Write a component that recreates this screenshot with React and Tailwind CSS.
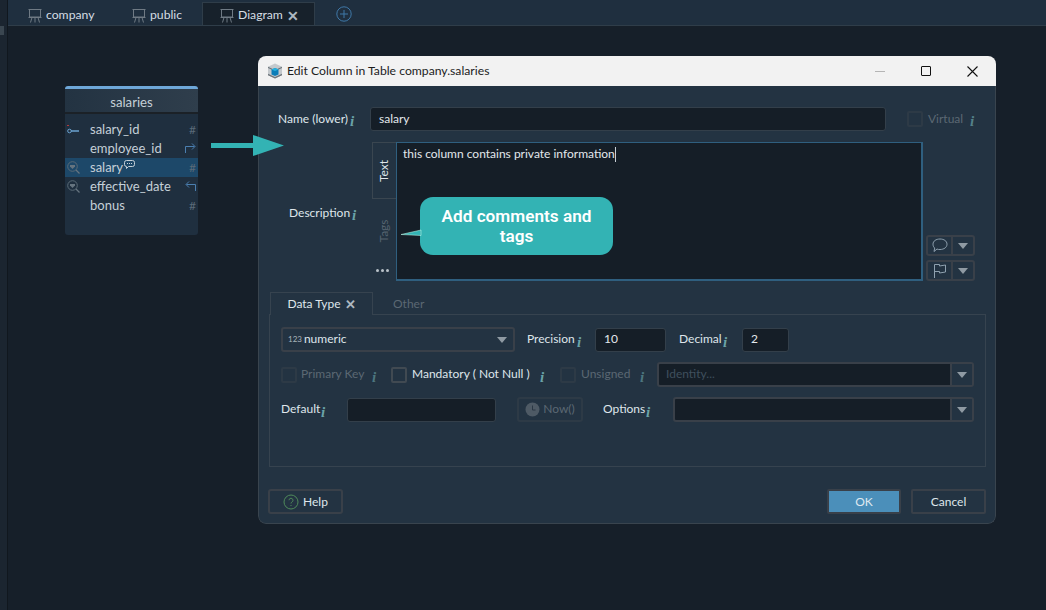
const I = ({ c = "" }) => (
  <span className={`inline-block w-[6px] shrink-0 mt-[6px] font-['Liberation_Serif',serif] italic font-bold text-[15px] leading-none text-[#6aa3a8] ${c}`}>i</span>
);
const Easel = () => (
  <svg className="shrink-0" width="14" height="15" viewBox="0 0 14 15" fill="none" stroke="#6f7a84" strokeWidth="1">
    <path d="M0.500 1.500h13M1.500 1.500v7.500h11v-7.500M0.500 9.500h13M4 9.500l-1.500 5M7 9.500v5M10 9.500l1.500 5" />
  </svg>
);
const Caret = ({ c = "border-t-[#8f9aa3]" }) => (
  <span className={`block w-0 h-0 border-x-[5px] border-x-transparent border-t-[6px] ${c}`} />
);
const Tab = ({ label, active, w }) => (
  <div className={`h-[23px] pt-[3px] flex items-center gap-[5px] ${w} ${active ? "bg-[#17212b] border border-b-0 border-[#2f3d49] pl-[17px]" : "pl-[20px]"}`}>
    <Easel />
    <span className="text-[#d5dde3] text-[12.2px] -ml-[1px]">{label}</span>
    {active && <span className="text-[#aeb8c0] text-[14px] leading-none -ml-[1px] font-bold">✕</span>}
  </div>
);
const Box = ({ c = "", children }) => (
  <div className={`bg-[#151e27] border border-[#333f4a] rounded-[3px] text-[#e3e8ec] flex items-center shrink-0 ${c}`}>{children}</div>
);
const Check = ({ on }) => (
  <span className={`block w-[16px] h-[16px] rounded-[2px] border-2 shrink-0 ${on ? "border-[#414a52]" : "border-[#2d3a46]"}`} />
);
const SelectBox = ({ c, children }) => (
  <div className={`h-[25px] flex shrink-0 rounded-[3px] border-2 border-[#394049] bg-[#151e27] ${c}`}>
    <div className="flex-1 flex items-center pl-[7px] pb-[2px] text-[#3f4f5d]">{children}</div>
    <div className="w-[22px] bg-[#233342] border-l-2 border-[#394049] flex items-center justify-center"><Caret /></div>
  </div>
);
const Row = ({ name, icon, right, extra, active }) => (
  <div className={`h-[19px] flex items-center relative ${active ? "bg-[#1d4869]" : ""}`}>
    <span className="w-[25px] pl-[2px] flex items-center shrink-0">{icon}</span>
    <span className="text-[#c5d0d8] text-[13px]">{name}</span>
    {extra}
    <span className="ml-auto pr-[2px] flex items-center text-[#5a6a78] text-[12px]">{right}</span>
  </div>
);
const Mag = () => (
  <svg width="13" height="13" viewBox="0 0 13 13" fill="none">
    <circle cx="5.500" cy="5.500" r="4.800" stroke="#5a6a76" />
    <path d="M3 4h5v1.500L5.500 8 3 5.500z" fill="#66747f" />
    <path d="M9 9l3.500 3.500" stroke="#66747f" strokeWidth="1.300" />
  </svg>
);
const Out = () => (
  <svg width="11" height="11" viewBox="0 0 11 11" fill="none" stroke="#4b7fb0"><path d="M0.500 10V3.500h9M7 0.500l3 3-3 3" /></svg>
);
const In = () => (
  <svg width="11" height="11" viewBox="0 0 11 11" fill="none" stroke="#4b7fb0"><path d="M10.500 10V3.500h-9M4 0.500l-3 3 3 3" /></svg>
);

export default function App() {
  return (
    <div className="w-[1046px] h-[610px] relative overflow-hidden bg-[#161f29] text-[12px] font-['Lato',sans-serif]">
      <div className="absolute left-0 top-0 bottom-0 w-[8px] bg-[#1b2530] border-r border-[#10171e]">
        <div className="mt-[26px] h-[9px] w-[4px] bg-[#3a4650]" />
      </div>
      <div className="ml-[8px] h-[26px] bg-[#1f2f3f] border-b border-[#2f3d49] flex items-end">
        <Tab label="company" w="w-[104px]" />
        <Tab label="public" w="w-[90px]" />
        <Tab label="Diagram" active w="w-[113px]" />
        <div className="ml-[21px] mb-[3px]">
          <svg width="16" height="16" viewBox="0 0 16 16" fill="none" stroke="#3f78a8"><circle cx="8" cy="8" r="7.200" /><path d="M8 4v8M4 8h8" /></svg>
        </div>
      </div>

      {/* diagram node */}
      <div className="absolute left-[65px] top-[86px] w-[133px] h-[149px] rounded-[3px] bg-[#1f2f3f] overflow-hidden border-t-[3px] border-[#6ea7d8]">
        <div className="h-[25px] pt-[5px] bg-gradient-to-r from-[#233342] to-[#2f3e4c] border-b-2 border-[#1b2127] flex items-center justify-center text-[#c5d0d8] text-[13.2px]">salaries</div>
        <div className="pt-[6px]">
          <Row name="salary_id" right="#" icon={
            <svg width="13" height="10" viewBox="0 0 13 10" fill="none"><path d="M0 0h2v1H0z" fill="#b23a3a" /><circle cx="2.500" cy="6" r="1.800" stroke="#6ba3d0" /><path d="M4 6h8" stroke="#6ba3d0" strokeWidth="1.400" /></svg>
          } />
          <Row name="employee_id" right={<Out />} />
          <Row name="salary" active icon={<Mag />} right="#" extra={
            <svg className="ml-[1px] -mt-[6px]" width="11" height="10" viewBox="0 0 11 10" fill="none"><path d="M2.500 0.500h6a2 2 0 0 1 2 2v2a2 2 0 0 1-2 2h-4l-2 2v-2a2 2 0 0 1-2-2v-2a2 2 0 0 1 2-2z" stroke="#c5d0d8" /><path d="M3 3.500h1M5 3.500h1M7 3.500h1" stroke="#c5d0d8" /></svg>
          } />
          <Row name="effective_date" icon={<Mag />} right={<In />} />
          <Row name="bonus" right="#" />
        </div>
      </div>

      {/* dialog */}
      <div className="absolute left-[258px] top-[56px] w-[738px] h-[468px] rounded-[8px] overflow-hidden flex flex-col">
        <div className="h-[30px] shrink-0 bg-[#f2f2f2] flex items-center pl-[9px] text-[#1c1c1c] text-[12.2px]">
          <svg width="16" height="16" viewBox="0 0 16 16">
            <path d="M8 0.500l7 3.200v8.600L8 15.500l-7-3.200V3.700z" fill="#c4c9cd" />
            <path d="M1 3.700L8 7l7-3.300v1.200L8 8.200 1 4.900zM1 12.300l7 3.200 7-3.200v-1.500l-7 3.200-7-3.200z" fill="#6f767c" />
            <path d="M4.500 6.500L8 5l3.500 1.500v5L8 13 4.500 11.500z" fill="#0c7db8" />
            <path d="M4.500 6.500L8 5l3.500 1.500L8 8z" fill="#25b2de" />
          </svg>
          <span className="ml-[4px]">Edit Column in Table company.salaries</span>
          <div className="ml-auto flex items-center">
            <span className="w-[10px] h-[1px] bg-[#b5b5b5] mr-[36px]" />
            <span className="w-[10px] h-[10px] border-[1.500px] border-[#111] rounded-[1px] mr-[36px]" />
            <svg className="mr-[18px]" width="11" height="11" viewBox="0 0 11 11" stroke="#111" strokeWidth="1.100"><path d="M0.500 0.500l10 10M10.500 0.500l-10 10" /></svg>
          </div>
        </div>

        <div className="flex-1 flex flex-col pl-[10px] pr-[10px] bg-[#233342] border border-t-0 border-[#39444e] rounded-b-[8px]">
          {/* Name */}
          <div className="flex items-center mt-[20px] h-[25px] -ml-[1px]">
            <div className="w-[102px] pl-[10px] flex items-center whitespace-nowrap text-[#dfe6eb] shrink-0">Name (lower)<I c="ml-[2px]" /></div>
            <Box c="w-[516px] h-[24px] pl-[8px]">salary</Box>
            <span className="ml-[21px]"><Check /></span>
            <span className="ml-[5px] w-[37px] text-[#5b6873]">Virtual</span>
            <I c="ml-[5px] opacity-70" />
          </div>

          {/* Description */}
          <div className="flex mt-[11px] h-[139px] relative -ml-[1px]">
            <div className="w-[104px] pl-[21px] pt-[62px] flex items-start whitespace-nowrap text-[#dfe6eb] shrink-0">Description<I c="ml-[2px] !mt-[4px]" /></div>
            <div className="w-[24px] flex flex-col shrink-0 items-center">
              <div className="w-[24px] h-[57px] border border-r-0 border-[#3a4650] flex items-center justify-center text-[#dfe6eb]">
                <span className="-rotate-90 block">Text</span>
              </div>
              <div className="h-[63px] flex items-center justify-center text-[#566470]">
                <span className="-rotate-90 block">Tags</span>
              </div>
              <div className="flex gap-[2px] ml-[-3px] mt-[7px]">
                <span className="w-[3px] h-[3px] rounded-full bg-[#b9c2c9]" />
                <span className="w-[3px] h-[3px] rounded-full bg-[#b9c2c9]" />
                <span className="w-[3px] h-[3px] rounded-full bg-[#b9c2c9]" />
              </div>
            </div>
            <div className="w-[527px] h-[139px] shrink-0 bg-[#151e27] border-2 border-[#2f5f7f] border-t-[1px] border-l-[1.500px] pl-[6px] pt-[2px] text-[#e3e8ec]">
              <span>this column contains private information</span><span className="inline-block w-[1px] h-[15px] bg-[#c8d0d6] align-middle" />
            </div>
            <div className="ml-[3px] flex flex-col justify-end gap-[4px]">
              <div className="flex w-[49px] h-[21px] rounded-[3px] border-2 border-[#394049]">
                <div className="w-[25px] border-r-2 border-[#394049] flex items-center justify-center">
                  <svg width="16" height="15" viewBox="0 0 16 15" fill="none" stroke="#8ea0ae"><path d="M8 1c3.900 0 7 2 7 5.200S11.900 11.500 8 11.500c-1 0-2 0-3-.500L2 13.500l.7-3.500C1.500 9 1 7.700 1 6.200 1 3 4.100 1 8 1z" /></svg>
                </div>
                <div className="flex-1 flex items-center justify-center"><Caret /></div>
              </div>
              <div className="flex w-[49px] h-[21px] rounded-[3px] border-2 border-[#394049]">
                <div className="w-[25px] border-r-2 border-[#394049] flex items-center justify-center">
                  <svg width="14" height="15" viewBox="0 0 14 15" fill="none" stroke="#8ea0ae"><path d="M1.500 15V1.500h5v1.500l6-1v7l-6 1V8.500h-5" /></svg>
                </div>
                <div className="flex-1 flex items-center justify-center"><Caret /></div>
              </div>
            </div>

            {/* callout */}
            <div className="absolute left-[152px] top-[55px] w-[193px] h-[58px] rounded-[13px] bg-[#33b3b4] flex items-center justify-center text-center text-white text-[17.2px] leading-[20px] font-semibold font-['Roboto',sans-serif] px-[10px]">
              Add comments and tags
            </div>
            <svg className="absolute left-[133px] top-[87px]" width="21" height="8" viewBox="0 0 21 8"><path d="M0 5.500L20 1v5.500z" fill="#33b3b4" stroke="#cfe" strokeWidth="0.500" /></svg>
          </div>

          {/* Tabs */}
          <div className="flex items-end h-[23px] mt-[11px] -mb-[1px] relative z-10 ml-[1px]">
            <div className="w-[103px] h-[23px] bg-[#233342] border border-b-0 border-[#36434f] flex items-center justify-center gap-[4px] text-[#dfe6eb]">
              Data Type <span className="text-[#aeb8c0] text-[13px] leading-none font-bold">✕</span>
            </div>
            <div className="ml-[20px] h-[23px] flex items-center text-[#5b6873]">Other</div>
          </div>

          {/* Panel */}
          <div className="w-[717px] h-[153px] border border-[#36434f] pl-[11px] pt-[12px] flex flex-col gap-[10px]">
            <div className="flex items-center h-[25px]">
              <div className="w-[234px] h-[25px] shrink-0 rounded-[3px] border-2 border-[#394049] flex items-center pl-[5px] pr-[6px] pb-[2px] text-[#dfe6eb]">
                <span className="text-[8px] text-[#aab5bd] mr-[2px]">123</span>numeric<span className="ml-auto mt-[2px]"><Caret /></span>
              </div>
              <span className="ml-[12px] w-[50px] pb-[2px] text-[#dfe6eb]">Precision</span><I />
              <Box c="ml-[12px] w-[71px] h-[24px] pl-[8px] pb-[2px]">10</Box>
              <span className="ml-[13px] w-[44px] pb-[2px] text-[#dfe6eb]">Decimal</span><I />
              <Box c="ml-[13px] w-[47px] h-[24px] pl-[8px] pb-[2px]">2</Box>
            </div>
            <div className="flex items-center h-[25px]">
              <Check />
              <span className="ml-[4px] w-[71px] pb-[2px] shrink-0 whitespace-nowrap text-[#5b6873]">Primary Key</span>
              <I c="opacity-60" />
              <span className="ml-[13px]"><Check on /></span>
              <span className="ml-[5px] w-[128px] pb-[2px] shrink-0 whitespace-nowrap text-[#dfe6eb]">Mandatory ( Not Null )</span>
              <I />
              <span className="ml-[14px]"><Check /></span>
              <span className="ml-[5px] w-[59px] pb-[2px] shrink-0 text-[#5b6873]">Unsigned</span>
              <I c="opacity-60" />
              <SelectBox c="ml-[11px] w-[317px]">Identity...</SelectBox>
            </div>
            <div className="flex items-center h-[25px]">
              <span className="w-[40px] pb-[2px] shrink-0 text-[#dfe6eb]">Default</span><I />
              <Box c="ml-[20px] w-[149px] h-[24px]" />
              <div className="ml-[21px] w-[66px] h-[25px] shrink-0 rounded-[3px] border-2 border-[#2d3a46] flex items-center justify-center gap-[3px] pb-[1px] text-[#5b6873]">
                <svg width="15" height="15" viewBox="0 0 15 15"><circle cx="7.500" cy="7.500" r="7" fill="#4e5a65" /><path d="M7.500 3.500v4.500h3" fill="none" stroke="#2a3744" /></svg>
                Now()
              </div>
              <span className="ml-[20px] w-[43px] pb-[2px] shrink-0 text-[#dfe6eb]">Options</span><I />
              <SelectBox c="ml-[21px] w-[301px]" />
            </div>
          </div>

          {/* Footer */}
          <div className="flex items-center mt-[22px] -ml-[1px] w-[718px]">
            <div className="w-[75px] h-[25px] rounded-[3px] border-2 border-[#394049] flex items-center justify-center gap-[4px] text-[#dfe6eb]">
              <svg width="16" height="16" viewBox="0 0 16 16" fill="none"><circle cx="8" cy="8" r="7" stroke="#4f8a5a" /><path d="M6 6.200a2 2 0 1 1 3 1.800c-.700.400-1 .800-1 1.500M8 11v1" stroke="#4f8a5a" /></svg>
              Help
            </div>
            <div className="ml-auto -mr-[1px] w-[74px] h-[25px] rounded-[2px] bg-[#4b8fba] border-2 border-[#394049] flex items-center justify-center text-[#dfe9f0]">OK</div>
            <div className="ml-[11px] w-[75px] h-[25px] rounded-[2px] border-2 border-[#394049] flex items-center justify-center text-[#dfe6eb]">Cancel</div>
          </div>
        </div>
      </div>

      {/* arrow */}
      <svg className="absolute left-[211px] top-[134px]" width="74" height="24" viewBox="0 0 74 24">
        <path d="M0 9h42V1l31 10.500L42 22v-8H0z" fill="#33b3b4" />
      </svg>
    </div>
  );
}
